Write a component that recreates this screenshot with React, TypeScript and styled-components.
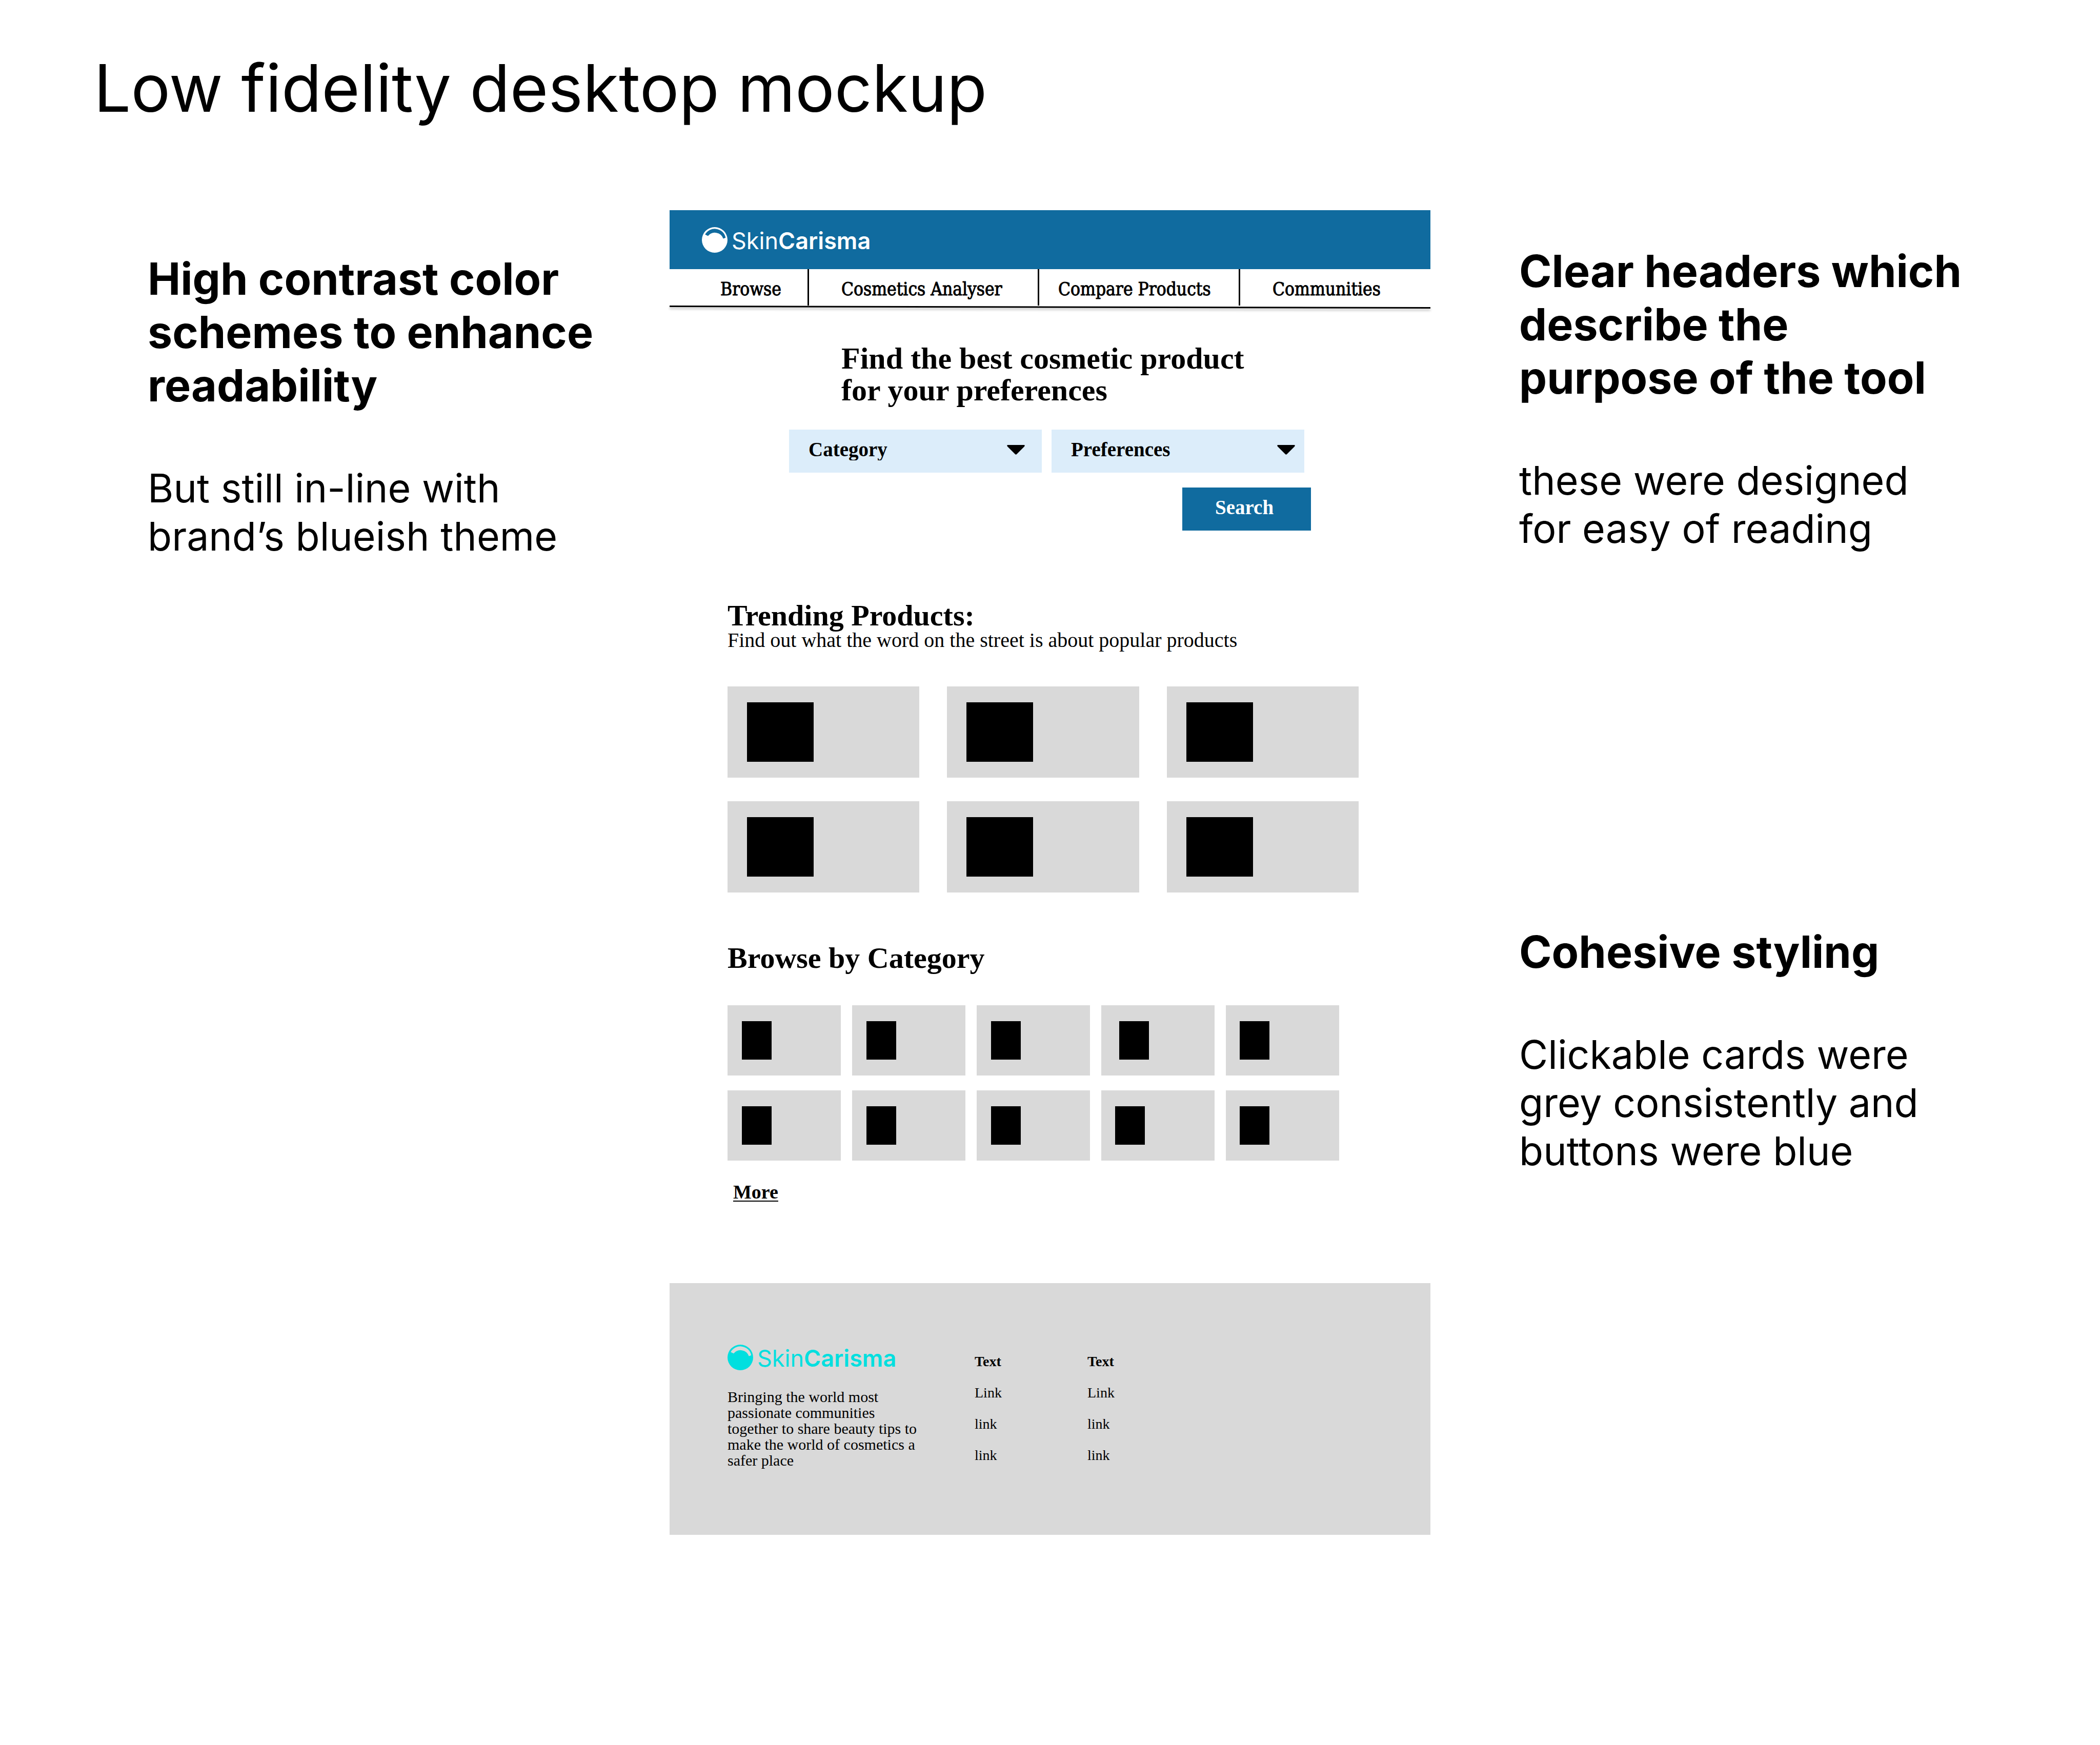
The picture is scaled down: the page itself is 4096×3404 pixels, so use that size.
import React from "react";
import styled, { createGlobalStyle } from "styled-components";

const blue = "#106b9f";
const grey = "#d9d9d9";
const cyan = "#00dfdf";
const sans = `Inter, "Liberation Sans", sans-serif`;
const serif = `"Liberation Serif", "Times New Roman", serif`;
const slab = `"DejaVu Serif Condensed", "DejaVu Serif", serif`;

const GlobalStyle = createGlobalStyle`
  *, *::before, *::after { box-sizing: border-box; }
  body { margin: 0; background: #fff; color: #000; }
  h1, h2, h3, p, ul { margin: 0; padding: 0; }
  ul { list-style: none; }
  a { color: inherit; text-decoration: none; }
`;

const Board = styled.div`
  min-height: 100vh;
  padding: 94px 0 160px;
  font-family: ${sans};
`;

const BoardTitle = styled.h1`
  padding-left: 183px;
  font-size: 128px;
  line-height: 156px;
  font-weight: 400;
`;

const Columns = styled.div`
  display: grid;
  grid-template-columns: 1fr 1484px 1fr;
  align-items: start;
  margin-top: 160px;
`;

const Notes = styled.aside<{ $top: number; $left: number }>`
  display: flex;
  flex-direction: column;
  gap: 727px;
  padding-top: ${(p) => p.$top}px;
  padding-left: ${(p) => p.$left}px;
`;

const NoteBlock = styled.section`
  display: flex;
  flex-direction: column;
  gap: 101px;
  white-space: pre;
`;

const NoteHeading = styled.h2`
  font-size: 86px;
  line-height: 104px;
  font-weight: 700;
`;

const NoteText = styled.p`
  font-size: 77px;
  line-height: 94px;
`;

const Mockup = styled.main`
  font-family: ${serif};
`;

const TopBar = styled.header`
  height: 115px;
  padding: 33px 63px;
  background: ${blue};
`;

const LogoLink = styled.a<{ $color: string }>`
  display: flex;
  align-items: flex-start;
  gap: 8px;
  color: ${(p) => p.$color};
  font-family: ${sans};
  font-size: 45px;
  line-height: 54px;
  font-weight: 400;
  width: max-content;

  svg {
    width: 50px;
    height: 50px;
    fill: currentColor;
  }

  strong {
    font-weight: 600;
  }
`;

const NavBar = styled.nav`
  display: grid;
  grid-template-columns: 269fr 449fr 392fr 374fr;
  height: 71px;
`;

const NavLink = styled.a<{ $inset: number }>`
  padding-top: 19px;
  padding-left: ${(p) => p.$inset}px;
  font-family: ${slab};
  font-size: 35px;
  line-height: 41px;
  white-space: nowrap;
  -webkit-text-stroke: 1px currentColor;

  & + & {
    border-left: 3px solid #000;
  }
`;

const NavRule = styled.svg`
  display: block;
  width: 100%;
  height: 10px;
  overflow: visible;
  filter: drop-shadow(0 4px 2px rgba(0, 0, 0, 0.25));
`;

const HeroHeading = styled.h2`
  margin-top: 62px;
  padding-left: 335px;
  font-size: 60px;
  line-height: 62px;
  white-space: pre;
`;

const SearchForm = styled.form`
  display: flex;
  flex-direction: column;
  gap: 29px;
  width: 1018px;
  margin: 46px 0 0 233px;
`;

const FieldRow = styled.div`
  display: flex;
  gap: 19px;
`;

const Field = styled.label<{ $arrow: number }>`
  display: grid;
  width: 493px;
  height: 84px;

  > * {
    grid-area: 1 / 1;
  }

  svg {
    width: 35px;
    height: 19px;
    margin: 30px ${(p) => p.$arrow}px 0 0;
    justify-self: end;
    pointer-events: none;
  }
`;

const Select = styled.select`
  appearance: none;
  width: 100%;
  height: 100%;
  margin: 0;
  padding: 0 38px 8px;
  border: 0;
  border-radius: 0;
  background: #dcedfa;
  color: #000;
  font: 700 39px ${serif};
`;

const SearchButton = styled.button`
  align-self: flex-end;
  width: 251px;
  height: 84px;
  padding: 0 64px 8px;
  border: 0;
  background: ${blue};
  color: #fff;
  font: 700 39px ${serif};
  text-align: left;
`;

const Section = styled.section<{ $top: number; $right: number }>`
  margin-top: ${(p) => p.$top}px;
  padding: 0 ${(p) => p.$right}px 0 113px;
`;

const SectionHeading = styled.h2`
  font-size: 58px;
  line-height: 56px;
`;

const SectionText = styled.p`
  font-size: 40px;
  line-height: 40px;
  white-space: nowrap;
`;

const ProductGrid = styled.div`
  display: grid;
  grid-template-columns: repeat(3, 1fr);
  gap: 46px 54px;
  margin-top: 70px;
`;

const CategoryGrid = styled.div`
  display: grid;
  grid-template-columns: repeat(5, 1fr);
  gap: 29px 22px;
  margin-top: 64px;
`;

const ProductCard = styled.a`
  height: 178px;
  padding: 31px 38px;
  background: ${grey};
`;

const CategoryCard = styled.a<{ $inset: number }>`
  height: 137px;
  padding: 31px ${(p) => p.$inset}px;
  background: ${grey};
`;

const Thumb = styled.span<{ $width: number }>`
  display: block;
  width: ${(p) => p.$width}px;
  height: 100%;
  background: #000;
`;

const MoreLink = styled.a`
  display: block;
  width: max-content;
  margin: 41px 0 0 11px;
  font-size: 38px;
  line-height: 40px;
  font-weight: 700;
  text-decoration: underline;
  text-decoration-thickness: 2px;
  text-underline-offset: 4px;
`;

const Footer = styled.footer`
  display: grid;
  grid-template-columns: 482px 220px 220px;
  height: 491px;
  margin-top: 158px;
  padding: 120px 113px;
  background: ${grey};
`;

const FooterText = styled.p`
  margin-top: 32px;
  font-size: 30px;
  line-height: 31px;
  white-space: pre;
`;

const LinkColumn = styled.div`
  display: flex;
  flex-direction: column;
  gap: 30px;
  margin-top: 17px;
  font-size: 28px;
  line-height: 31px;

  h3 {
    font-size: 28px;
    line-height: 31px;
  }

  ul {
    display: flex;
    flex-direction: column;
    gap: 30px;
  }
`;

const navItems = [
  { label: "Browse", inset: 99 },
  { label: "Cosmetics Analyser", inset: 63 },
  { label: "Compare Products", inset: 37 },
  { label: "Communities", inset: 63 },
];

const products = ["p1", "p2", "p3", "p4", "p5", "p6"];
const categoryInsets = [28, 28, 28, 35, 27, 28, 28, 28, 27, 27];

function Logo({ color }: { color: string }) {
  return (
    <LogoLink href="#home" $color={color}>
      <svg viewBox="0 0 176 176" aria-hidden="true">
        <path
          fillRule="evenodd"
          d="M88 0a88 88 0 1 1 0 176a88 88 0 1 1 0-176ZM22 51L42 61A61 61 0 0 1 147 79L163 73A76 76 0 0 0 22 51Z"
        />
      </svg>
      <span>
        Skin<strong>Carisma</strong>
      </span>
    </LogoLink>
  );
}

function Dropdown({ label, arrow }: { label: string; arrow: number }) {
  return (
    <Field $arrow={arrow}>
      <Select aria-label={label}>
        <option>{label}</option>
      </Select>
      <svg viewBox="0 0 35 19" aria-hidden="true">
        <path d="M2 0H33Q36 0 34 3L19 18Q17.500 19.500 16 18L1 3Q-1 0 2 0Z" />
      </svg>
    </Field>
  );
}

function Note({ title, text }: { title: string; text: string }) {
  return (
    <NoteBlock>
      <NoteHeading>{title}</NoteHeading>
      <NoteText>{text}</NoteText>
    </NoteBlock>
  );
}

function FooterLinks() {
  return (
    <LinkColumn>
      <h3>Text</h3>
      <ul>
        {["Link", "link", "link"].map((text, i) => (
          <li key={i}>
            <a href="#link">{text}</a>
          </li>
        ))}
      </ul>
    </LinkColumn>
  );
}

export default function App() {
  return (
    <Board>
      <GlobalStyle />
      <BoardTitle>Low fidelity desktop mockup</BoardTitle>
      <Columns>
        <Notes $top={82} $left={288}>
          <Note
            title={"High contrast color\nschemes to enhance\nreadability"}
            text={"But still in-line with\nbrand’s blueish theme"}
          />
        </Notes>

        <Mockup>
          <TopBar>
            <Logo color="#fff" />
          </TopBar>
          <NavBar>
            {navItems.map((item) => (
              <NavLink key={item.label} href="#nav" $inset={item.inset}>
                {item.label}
              </NavLink>
            ))}
          </NavBar>
          <NavRule viewBox="0 0 1484 10" preserveAspectRatio="none" aria-hidden="true">
            <path d="M0 0L1484 3V6L0 3Z" />
          </NavRule>

          <HeroHeading>{"Find the best cosmetic product\nfor your preferences"}</HeroHeading>
          <SearchForm>
            <FieldRow>
              <Dropdown label="Category" arrow={33} />
              <Dropdown label="Preferences" arrow={18} />
            </FieldRow>
            <SearchButton type="button">Search</SearchButton>
          </SearchForm>

          <Section $top={138} $right={140}>
            <SectionHeading>Trending Products:</SectionHeading>
            <SectionText>Find out what the word on the street is about popular products</SectionText>
            <ProductGrid>
              {products.map((id) => (
                <ProductCard key={id} href="#product">
                  <Thumb $width={130} />
                </ProductCard>
              ))}
            </ProductGrid>
          </Section>

          <Section $top={100} $right={178}>
            <SectionHeading>Browse by Category</SectionHeading>
            <CategoryGrid>
              {categoryInsets.map((inset, i) => (
                <CategoryCard key={i} href="#category" $inset={inset}>
                  <Thumb $width={58} />
                </CategoryCard>
              ))}
            </CategoryGrid>
            <MoreLink href="#more">More</MoreLink>
          </Section>

          <Footer>
            <div>
              <Logo color={cyan} />
              <FooterText>
                {
                  "Bringing the world most\npassionate communities\ntogether to share beauty tips to\nmake the world of cosmetics a\nsafer place"
                }
              </FooterText>
            </div>
            <FooterLinks />
            <FooterLinks />
          </Footer>
        </Mockup>

        <Notes $top={67} $left={173}>
          <Note
            title={"Clear headers which\ndescribe the\npurpose of the tool"}
            text={"these were designed\nfor easy of reading"}
          />
          <Note
            title="Cohesive styling"
            text={"Clickable cards were\ngrey consistently and\nbuttons were blue"}
          />
        </Notes>
      </Columns>
    </Board>
  );
}
